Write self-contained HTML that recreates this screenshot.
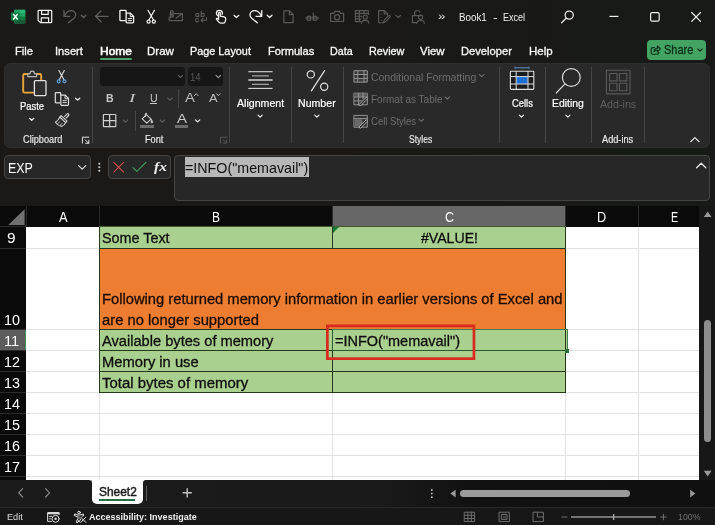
<!DOCTYPE html>
<html>
<head>
<meta charset="utf-8">
<title>Book1 - Excel</title>
<style>
*{box-sizing:border-box;margin:0;padding:0}
html,body{width:715px;height:525px;overflow:hidden;background:#1a1918;font-family:"Liberation Sans",sans-serif;}
#app{position:relative;width:715px;height:525px;overflow:hidden;background:linear-gradient(90deg,#1b1917 0,#1a1918 350px,#171a17 715px);}
.a{position:absolute}
.t{position:absolute;white-space:nowrap;line-height:1;transform-origin:0 0;font-family:"Liberation Sans",sans-serif}
svg{position:absolute;left:0;top:0;overflow:visible}
.sep{position:absolute;width:1px;background:#474747;top:67px;height:76px}
.ch{position:absolute;top:206px;height:20.5px;background:#0a0a0a;color:#fff;font-size:13.5px;text-align:center;line-height:1;padding-top:5px}
.rh{position:absolute;left:0;width:26px;background:#0a0a0a}
.hl{position:absolute;left:26px;width:673px;height:1px;background:#e2e2e2}
.vl{position:absolute;top:226.5px;height:253.5px;width:1px;background:#e2e2e2}
.bd{position:absolute;background:#26381c}
</style>
</head>
<body>
<div id="app">

<!-- ===== TABS ROW ===== -->
<div class="a" style="left:100px;top:58.4px;width:31.5px;height:1.8px;background:#4b9f6a;border-radius:1px"></div>
<div class="a" style="left:646.5px;top:39.5px;width:59.5px;height:20.5px;background:#42a363;border-radius:4px"></div>

<!-- ===== RIBBON ===== -->
<div class="a" style="left:4px;top:63px;width:706px;height:84.5px;background:#292929;border-radius:7px;box-shadow:inset 0 0 0 1px #2e2e2e"></div>
<div class="sep" style="left:92px"></div>
<div class="sep" style="left:229px"></div>
<div class="sep" style="left:291px"></div>
<div class="sep" style="left:343px"></div>
<div class="sep" style="left:499px"></div>
<div class="sep" style="left:545px"></div>
<div class="sep" style="left:591px"></div>
<div class="sep" style="left:644px"></div>
<div class="a" style="left:178px;top:89px;width:1px;height:19px;background:#474747"></div>
<div class="a" style="left:134.5px;top:110.5px;width:1px;height:20px;background:#474747"></div>
<div class="a" style="left:100px;top:67px;width:84.5px;height:19px;background:#161616;border-radius:3.5px"></div>
<div class="a" style="left:187.5px;top:67px;width:35.5px;height:19px;background:#161616;border-radius:3.5px"></div>
<div class="a" style="left:140px;top:124.8px;width:13.5px;height:3px;background:#6c6c6c"></div>
<div class="a" style="left:174.5px;top:124.8px;width:13.5px;height:3px;background:#6c6c6c"></div>
<div class="a" style="left:150px;top:103.4px;width:7.3px;height:1px;background:#c9c9c9"></div>

<!-- ===== FORMULA BAR ===== -->
<div class="a" style="left:4.3px;top:155px;width:86.5px;height:24.3px;background:#272727;border:1px solid #454545;border-radius:4px"></div>
<div class="a" style="left:108px;top:155px;width:63px;height:24.3px;background:#272727;border:1px solid #454545;border-radius:4px"></div>
<div class="a" style="left:174.3px;top:155px;width:536px;height:45.8px;background:#272727;border:1px solid #454545;border-radius:4px"></div>
<div class="a" style="left:185px;top:157px;width:124px;height:20px;background:#b8b8b8"></div>

<!-- ===== GRID ===== -->
<div class="a" style="left:0;top:206px;width:699px;height:274px;background:#fff"></div>
<div class="ch" style="left:0;width:26px"></div>
<div class="ch" style="left:26px;width:73px"></div>
<div class="ch" style="left:99px;width:233px"></div>
<div class="ch" style="left:332px;width:233.5px;background:#676767"></div>
<div class="ch" style="left:565.5px;width:72.5px"></div>
<div class="ch" style="left:638px;width:61px"></div>
<div class="a" style="left:332px;top:225.5px;width:233.5px;height:1.2px;background:#3c8a50"></div>
<div class="rh" style="top:226.5px;height:253.5px"></div>
<div class="rh" style="top:329.5px;height:21px;background:#5d5d5d"></div>
<div class="a" style="left:25px;top:329.5px;width:1.2px;height:21px;background:#3c8a50"></div>
<!-- header separators -->
<div class="a" style="left:25.5px;top:206px;width:1px;height:20.5px;background:#2b2b2b"></div>
<div class="a" style="left:98.5px;top:206px;width:1px;height:20.5px;background:#2b2b2b"></div>
<div class="a" style="left:331.5px;top:206px;width:1px;height:20.5px;background:#2b2b2b"></div>
<div class="a" style="left:565px;top:206px;width:1px;height:20.5px;background:#2b2b2b"></div>
<div class="a" style="left:637.5px;top:206px;width:1px;height:20.5px;background:#2b2b2b"></div>
<div class="a" style="left:0;top:226px;width:26px;height:1px;background:#2b2b2b"></div>
<div class="a" style="left:0;top:248px;width:26px;height:1px;background:#2b2b2b"></div>
<div class="a" style="left:0;top:329px;width:26px;height:1px;background:#2b2b2b"></div>
<div class="a" style="left:0;top:350px;width:26px;height:1px;background:#2b2b2b"></div>
<div class="a" style="left:0;top:371px;width:26px;height:1px;background:#2b2b2b"></div>
<div class="a" style="left:0;top:392px;width:26px;height:1px;background:#2b2b2b"></div>
<div class="a" style="left:0;top:413px;width:26px;height:1px;background:#2b2b2b"></div>
<div class="a" style="left:0;top:434px;width:26px;height:1px;background:#2b2b2b"></div>
<div class="a" style="left:0;top:455px;width:26px;height:1px;background:#2b2b2b"></div>
<div class="a" style="left:0;top:476px;width:26px;height:1px;background:#2b2b2b"></div>
<!-- gridlines -->
<div class="hl" style="top:248px"></div>
<div class="hl" style="top:329px"></div>
<div class="hl" style="top:350px"></div>
<div class="hl" style="top:371px"></div>
<div class="hl" style="top:392px"></div>
<div class="hl" style="top:413px"></div>
<div class="hl" style="top:434px"></div>
<div class="hl" style="top:455px"></div>
<div class="hl" style="top:476px"></div>
<div class="vl" style="left:98.5px"></div>
<div class="vl" style="left:331.5px"></div>
<div class="vl" style="left:565px"></div>
<div class="vl" style="left:637.5px"></div>
<!-- fills -->
<div class="a" style="left:99px;top:226.5px;width:466.5px;height:22px;background:#a9d08e"></div>
<div class="a" style="left:99px;top:248px;width:466.5px;height:82px;background:#ed7d31"></div>
<div class="a" style="left:99px;top:329.5px;width:466.5px;height:63px;background:#a9d08e"></div>
<div class="a" style="left:565px;top:330px;width:3px;height:20px;background:#a9d08e"></div>
<!-- cell borders -->
<div class="bd" style="left:99px;top:247.6px;width:467px;height:1px"></div>
<div class="bd" style="left:99px;top:329px;width:467px;height:1px"></div>
<div class="bd" style="left:99px;top:350px;width:467px;height:1px"></div>
<div class="bd" style="left:99px;top:371px;width:467px;height:1px"></div>
<div class="bd" style="left:99px;top:392px;width:467px;height:1px"></div>
<div class="bd" style="left:98.5px;top:226.5px;width:1px;height:166px"></div>
<div class="bd" style="left:332px;top:226.5px;width:1px;height:21px"></div>
<div class="bd" style="left:332px;top:329px;width:1px;height:64px"></div>
<div class="bd" style="left:565px;top:226.5px;width:1px;height:166px"></div>
<div class="a" style="left:99px;top:226px;width:467px;height:1px;background:#3f5a33"></div>
<!-- selection C11 -->
<div class="a" style="left:332px;top:329px;width:236px;height:22px;border:1px solid #3f7d4d;border-left-color:#2b5c35;border-bottom-color:#2a5a30"></div>
<div class="a" style="left:565px;top:349px;width:4px;height:4px;background:#2d6b3c"></div>

<!-- ===== VSCROLL ===== -->
<div class="a" style="left:699px;top:206px;width:16px;height:274px;background:#171717"></div>
<div class="a" style="left:704.3px;top:319.7px;width:7px;height:122px;background:#8d8d8d;border-radius:3.5px"></div>

<!-- ===== SHEET TABS ===== -->
<div class="a" style="left:0;top:480px;width:715px;height:28px;background:linear-gradient(90deg,#1b1b1c 0,#1a1a1b 380px,#111112 470px,#101011 715px)"></div>
<div class="a" style="left:0;top:507px;width:715px;height:1px;background:#2a2a2a"></div>
<div class="a" style="left:91.6px;top:480px;width:51.4px;height:23.6px;background:#fff;border-radius:0 0 5px 5px"></div>
<div class="a" style="left:99.3px;top:499.3px;width:36.2px;height:2px;background:#217346"></div>
<div class="a" style="left:146px;top:485.5px;width:1px;height:15px;background:#5c5c5c"></div>
<div class="a" style="left:460.3px;top:489.8px;width:169.6px;height:7.6px;background:#9b9b9b;border-radius:3.8px"></div>

<!-- ===== STATUS BAR ===== -->
<div class="a" style="left:0;top:508px;width:715px;height:17px;background:#171717"></div>

<!-- ===== TEXT ===== -->
<div id="txt" style="position:absolute;left:0;top:0;width:715px;height:525px;will-change:transform">
<div class="t" style="left:459.40px;top:12.00px;font-size:11.5px;color:#efefef;transform:scaleX(0.8525);">Book1</div>
<div class="t" style="left:493.20px;top:12.00px;font-size:11.5px;color:#efefef;transform:scaleX(1.2228);">-</div>
<div class="t" style="left:503.00px;top:12.00px;font-size:11.5px;color:#efefef;transform:scaleX(0.7822);">Excel</div>
<div class="t" style="left:438.30px;top:11.00px;font-size:11px;color:#e0e0e0;transform:scaleX(1.2082);">&raquo;</div>
<div class="t" style="left:15.30px;top:46.00px;font-size:11px;color:#fafafa;transform:scaleX(1.0206);-webkit-text-stroke:0.3px #fafafa;">File</div>
<div class="t" style="left:55.10px;top:46.00px;font-size:11px;color:#fafafa;transform:scaleX(1.0140);-webkit-text-stroke:0.3px #fafafa;">Insert</div>
<div class="t" style="left:99.90px;top:46.00px;font-size:11px;color:#ffffff;transform:scaleX(1.0905);-webkit-text-stroke:0.55px #fff;">Home</div>
<div class="t" style="left:146.80px;top:46.00px;font-size:11px;color:#fafafa;transform:scaleX(1.0478);-webkit-text-stroke:0.3px #fafafa;">Draw</div>
<div class="t" style="left:189.60px;top:46.00px;font-size:11px;color:#fafafa;transform:scaleX(0.9857);-webkit-text-stroke:0.3px #fafafa;">Page Layout</div>
<div class="t" style="left:267.70px;top:46.00px;font-size:11px;color:#fafafa;transform:scaleX(1.0100);-webkit-text-stroke:0.3px #fafafa;">Formulas</div>
<div class="t" style="left:329.80px;top:46.00px;font-size:11px;color:#fafafa;transform:scaleX(0.9763);-webkit-text-stroke:0.3px #fafafa;">Data</div>
<div class="t" style="left:368.60px;top:46.00px;font-size:11px;color:#fafafa;transform:scaleX(0.9812);-webkit-text-stroke:0.3px #fafafa;">Review</div>
<div class="t" style="left:419.70px;top:46.00px;font-size:11px;color:#fafafa;transform:scaleX(1.0357);-webkit-text-stroke:0.3px #fafafa;">View</div>
<div class="t" style="left:460.80px;top:46.00px;font-size:11px;color:#fafafa;transform:scaleX(1.0151);-webkit-text-stroke:0.3px #fafafa;">Developer</div>
<div class="t" style="left:529.20px;top:46.00px;font-size:11px;color:#fafafa;transform:scaleX(1.0475);-webkit-text-stroke:0.3px #fafafa;">Help</div>
<div class="t" style="left:663.50px;top:44.00px;font-size:12.3px;color:#0b2f18;transform:scaleX(0.8925);-webkit-text-stroke:0.3px #0b2f18;">Share</div>
<div class="t" style="left:20.10px;top:101.00px;font-size:10.5px;color:#ffffff;transform:scaleX(0.8973);-webkit-text-stroke:0.2px #fff;">Paste</div>
<div class="t" style="left:237.00px;top:98.00px;font-size:10.5px;color:#ffffff;transform:scaleX(1.0106);-webkit-text-stroke:0.2px #fff;">Alignment</div>
<div class="t" style="left:298.30px;top:98.00px;font-size:10.5px;color:#ffffff;transform:scaleX(1.0091);-webkit-text-stroke:0.2px #fff;">Number</div>
<div class="t" style="left:511.50px;top:98.00px;font-size:10.5px;color:#ffffff;transform:scaleX(0.8953);-webkit-text-stroke:0.2px #fff;">Cells</div>
<div class="t" style="left:552.00px;top:98.00px;font-size:10.5px;color:#ffffff;transform:scaleX(0.9904);-webkit-text-stroke:0.2px #fff;">Editing</div>
<div class="t" style="left:600.00px;top:99.00px;font-size:10.5px;color:#5f5f5f;transform:scaleX(1.0166);">Add-ins</div>
<div class="t" style="left:23.20px;top:135.00px;font-size:10px;color:#ececec;transform:scaleX(0.9180);-webkit-text-stroke:0.15px #ececec;">Clipboard</div>
<div class="t" style="left:145.20px;top:135.00px;font-size:10px;color:#ececec;transform:scaleX(0.9143);-webkit-text-stroke:0.15px #ececec;">Font</div>
<div class="t" style="left:409.30px;top:135.00px;font-size:10px;color:#ececec;transform:scaleX(0.8519);-webkit-text-stroke:0.15px #ececec;">Styles</div>
<div class="t" style="left:602.00px;top:135.00px;font-size:10px;color:#ececec;transform:scaleX(0.9202);-webkit-text-stroke:0.15px #ececec;">Add-ins</div>
<div class="t" style="left:370.50px;top:72.00px;font-size:10.5px;color:#6e6e6e;transform:scaleX(0.9958);">Conditional Formatting</div>
<div class="t" style="left:370.50px;top:94.00px;font-size:10.5px;color:#6e6e6e;transform:scaleX(0.9521);">Format as Table</div>
<div class="t" style="left:370.50px;top:116.00px;font-size:10.5px;color:#6e6e6e;transform:scaleX(0.9071);">Cell Styles</div>
<div class="t" style="left:189.50px;top:72.00px;font-size:10.5px;color:#575757;transform:scaleX(0.9155);">14</div>
<div class="t" style="left:106.10px;top:93.00px;font-size:11.5px;color:#c9c9c9;transform:scaleX(0.9143);font-weight:bold;">B</div>
<div class="t" style="left:128.80px;top:92.00px;font-size:12px;color:#c9c9c9;transform:scaleX(1.5750);font-style:italic;font-family:'Liberation Serif',serif;">I</div>
<div class="t" style="left:149.80px;top:93.00px;font-size:11px;color:#c9c9c9;transform:scaleX(0.9682);">U</div>
<div class="t" style="left:185.10px;top:91.00px;font-size:13.5px;color:#bdbdbd;transform:scaleX(1.0981);">A</div>
<div class="t" style="left:208.80px;top:93.00px;font-size:11.5px;color:#bdbdbd;transform:scaleX(1.1210);">A</div>
<div class="t" style="left:176.80px;top:113.00px;font-size:12.5px;color:#c9c9c9;transform:scaleX(1.1985);">A</div>
<div class="t" style="left:8.30px;top:161.00px;font-size:14px;color:#ffffff;transform:scaleX(0.8888);">EXP</div>
<div class="t" style="left:185.30px;top:161.00px;font-size:14.5px;color:#111;transform:scaleX(0.9847);">=INFO("memavail")</div>
<div class="t" style="left:153.80px;top:160.00px;font-size:13.5px;color:#ececec;transform:scaleX(1.1467);font-style:italic;font-weight:bold;font-family:'Liberation Serif',serif;">fx</div>
<div class="t" style="left:98.70px;top:485.00px;font-size:13px;color:#1b1b1b;transform:scaleX(0.9174);-webkit-text-stroke:0.45px #1b1b1b;">Sheet2</div>
<div class="t" style="left:6.90px;top:512.00px;font-size:9.5px;color:#dcdcdc;transform:scaleX(0.9649);">Edit</div>
<div class="t" style="left:88.50px;top:512.00px;font-size:9.5px;color:#f2f2f2;transform:scaleX(0.9486);font-weight:bold;">Accessibility: Investigate</div>
<div class="t" style="left:678.00px;top:512.00px;font-size:9.5px;color:#6f6f6f;transform:scaleX(0.9254);">100%</div>
<div class="t" style="left:102.10px;top:231.00px;font-size:14.7px;color:#0d0d0d;transform:scaleX(0.9779);-webkit-text-stroke:0.3px #0d0d0d;">Some Text</div>
<div class="t" style="left:420.50px;top:231.00px;font-size:14.7px;color:#0d0d0d;transform:scaleX(0.9608);-webkit-text-stroke:0.3px #0d0d0d;">#VALUE!</div>
<div class="t" style="left:102.00px;top:292.00px;font-size:14.7px;color:#1c0d04;transform:scaleX(1.0037);-webkit-text-stroke:0.3px #1c0d04;">Following returned memory information in earlier versions of Excel and</div>
<div class="t" style="left:102.00px;top:313.00px;font-size:14.7px;color:#1c0d04;transform:scaleX(1.0066);-webkit-text-stroke:0.3px #1c0d04;">are no longer supported</div>
<div class="t" style="left:102.00px;top:334.00px;font-size:14.7px;color:#0d0d0d;transform:scaleX(0.9966);-webkit-text-stroke:0.3px #0d0d0d;">Available bytes of memory</div>
<div class="t" style="left:334.50px;top:334.00px;font-size:14.7px;color:#0d0d0d;transform:scaleX(0.9864);-webkit-text-stroke:0.3px #0d0d0d;">=INFO("memavail")</div>
<div class="t" style="left:102.20px;top:355.00px;font-size:14.7px;color:#0d0d0d;transform:scaleX(1.0039);-webkit-text-stroke:0.3px #0d0d0d;">Memory in use</div>
<div class="t" style="left:102.00px;top:376.00px;font-size:14.7px;color:#0d0d0d;transform:scaleX(1.0176);-webkit-text-stroke:0.3px #0d0d0d;">Total bytes of memory</div>
<div class="t" style="left:7.40px;top:231.00px;font-size:14.5px;color:#fff;transform:scaleX(1.0646);">9</div>
<div class="t" style="left:3.70px;top:313.00px;font-size:14.5px;color:#fff;transform:scaleX(0.9913);">10</div>
<div class="t" style="left:4.30px;top:334.00px;font-size:14.5px;color:#fff;transform:scaleX(1.0158);">11</div>
<div class="t" style="left:3.70px;top:355.00px;font-size:14.5px;color:#fff;transform:scaleX(0.9913);">12</div>
<div class="t" style="left:3.70px;top:376.00px;font-size:14.5px;color:#fff;transform:scaleX(0.9913);">13</div>
<div class="t" style="left:3.70px;top:397.00px;font-size:14.5px;color:#fff;transform:scaleX(0.9913);">14</div>
<div class="t" style="left:3.70px;top:418.00px;font-size:14.5px;color:#fff;transform:scaleX(0.9913);">15</div>
<div class="t" style="left:3.70px;top:439.00px;font-size:14.5px;color:#fff;transform:scaleX(0.9913);">16</div>
<div class="t" style="left:3.70px;top:460.00px;font-size:14.5px;color:#fff;transform:scaleX(0.9913);">17</div>
<div class="t" style="left:58.80px;top:210.00px;font-size:14px;color:#fff;transform:scaleX(0.9204);">A</div>
<div class="t" style="left:211.70px;top:210.00px;font-size:14px;color:#fff;transform:scaleX(0.8562);">B</div>
<div class="t" style="left:444.50px;top:210.00px;font-size:14px;color:#fff;transform:scaleX(0.8988);">C</div>
<div class="t" style="left:597.10px;top:210.00px;font-size:14px;color:#fff;transform:scaleX(0.9086);">D</div>
<div class="t" style="left:671.30px;top:210.00px;font-size:14px;color:#fff;transform:scaleX(0.7599);">E</div>
</div>
<svg width="715" height="525" viewBox="0 0 715 525" fill="none" stroke-linecap="round" stroke-linejoin="round">
<!-- ============ TITLE BAR ============ -->
<!-- excel logo -->
<g stroke="none">
  <rect x="14" y="9.8" width="11.2" height="13.7" rx="1.2" fill="#1f9a5f"/>
  <rect x="14.5" y="9.8" width="5.4" height="3.6" fill="#21a366"/>
  <rect x="19.9" y="9.8" width="5.4" height="3.6" fill="#2db777"/>
  <rect x="14.5" y="13.3" width="5.4" height="3.4" fill="#107c41"/>
  <rect x="19.9" y="13.3" width="5.4" height="3.4" fill="#21a366"/>
  <rect x="14.5" y="16.6" width="5.4" height="3.4" fill="#185c37"/>
  <rect x="19.9" y="16.6" width="5.4" height="3.4" fill="#107c41"/>
  <rect x="14.5" y="19.9" width="10.8" height="3.5" fill="#185c37"/>
  <rect x="10.9" y="12.4" width="8.4" height="8.4" rx="0.9" fill="#107c41"/>
  <path d="M13.2 14.1 L17.7 19.5 M17.7 14.1 L13.2 19.5" stroke="#f4fff8" stroke-width="1.5" stroke-linecap="butt"/>
</g>
<!-- save -->
<g stroke="#f4f4f4" stroke-width="1.2">
  <path d="M38.1 11.2 Q38.1 10.4 38.9 10.4 H50.9 Q51.7 10.4 51.7 11.2 V21.9 Q51.7 22.7 50.9 22.7 H40.4 L38.1 20.4 Z"/>
  <path d="M41.6 10.6 V14.4 H48.2 V10.6"/>
  <path d="M41.3 22.5 V17.8 H48.6 V22.5"/>
</g>
<!-- undo (dim) -->
<g stroke="#606060" stroke-width="1.3">
  <path d="M64 10.6 V16.3 H69.7"/>
  <path d="M64.4 16 C66 12.6 68.4 10.7 71 10.7 C73.8 10.7 75.7 12.6 75.7 15 C75.7 16.4 75 17.4 74 18.2 L68.4 22.8"/>
  <path d="M81.3 15.3 L83.6 17.5 L85.9 15.3"/>
</g>
<!-- back arrow (dim) -->
<g stroke="#606060" stroke-width="1.3">
  <path d="M95.8 16.3 H108.2 M101 10.9 L95.6 16.3 L101 21.7"/>
</g>
<!-- copy/paste -->
<g stroke="#f4f4f4" stroke-width="1.3">
  <path d="M125.3 20.6 H120.6 Q119.9 20.6 119.9 19.9 V11.1 Q119.9 10.4 120.6 10.4 H125.4 Q126.1 10.4 126.1 11.1 V13"/>
  <path d="M126.2 13.2 H130.4 L133.6 16.4 V22 Q133.6 22.8 132.8 22.8 H126.9 Q126.1 22.8 126.1 22 Z" fill="#1a1918"/>
  <path d="M130.2 13.4 V16.6 H133.4" stroke-width="1"/>
  <path d="M128.2 18.6 H131.6 M128.2 20.6 H131.6" stroke-width="1"/>
</g>
<!-- scissors -->
<g stroke="#f4f4f4" stroke-width="1.2">
  <path d="M148 10.3 L153.6 20.2 M154.4 10.3 L148.8 20.2"/>
  <circle cx="148.6" cy="21.6" r="1.6"/>
  <circle cx="153.8" cy="21.6" r="1.6"/>
</g>
<!-- envelope + clip (dim) -->
<g stroke="#5a5a5a" stroke-width="1.2">
  <path d="M174.5 13.6 H182.4 V20.6 H169.2 V17"/>
  <path d="M176 18.2 L182.2 13.8"/>
  <path d="M170.4 17.8 V12.2 Q170.4 10.6 171.8 10.6 Q173.2 10.6 173.2 12.2 V16.4 Q173.2 17.2 172.5 17.2 Q171.8 17.2 171.8 16.4 V12.6"/>
</g>
<!-- ab c<- (dim) -->
<g stroke="#5a5a5a" stroke-width="1.1">
  <path d="M198.7 13.5 V16.6 M198.7 15 Q198.7 13.4 197.2 13.4 Q195.6 13.4 195.6 15 Q195.6 16.6 197.2 16.6 Q198.7 16.6 198.7 15"/>
  <path d="M201.2 11 V16.6 M201.2 15 Q201.2 13.4 202.8 13.4 Q204.4 13.4 204.4 15 Q204.4 16.6 202.8 16.6 Q201.2 16.6 201.2 15"/>
  <path d="M198.6 19.2 Q197.8 18.5 197 18.5 Q195.5 18.5 195.5 20.2 Q195.5 21.9 197 21.9 Q197.8 21.9 198.6 21.2"/>
  <path d="M206.6 17.6 V20.3 H201.2 M203 18.4 L201 20.3 L203 22.2"/>
</g>
<!-- touch hand -->
<g stroke="#f4f4f4" stroke-width="1.25">
  <path d="M217.6 15.6 Q216.4 14.6 216.4 13.2 Q216.4 10.4 219.4 10.4 Q222.4 10.4 222.4 13.2 Q222.4 13.8 222.2 14.3"/>
  <path d="M218.6 19.3 V13.1 Q218.6 12.2 219.4 12.2 Q220.3 12.2 220.3 13.1 V16.2 L224.2 16.9 Q225.8 17.3 225.7 18.9 L225.3 21.3 Q225 23.1 223.2 23.1 H220.8 Q219.6 23.1 218.9 22.2 L216.5 19.3 Q216.2 18.6 217 18.3 Q217.6 18.1 218.6 19.3"/>
  <path d="M234 15.3 L236.4 17.5 L238.8 15.3"/>
</g>
<!-- redo -->
<g stroke="#f4f4f4" stroke-width="1.3">
  <path d="M261.7 10.6 V16.3 H256"/>
  <path d="M261.3 16 C259.7 12.6 257.3 10.7 254.7 10.7 C251.9 10.7 250 12.6 250 15 C250 16.4 250.7 17.4 251.7 18.2 L257.3 22.8"/>
  <path d="M267.2 15.3 L269.6 17.5 L272 15.3"/>
</g>
<!-- new doc (dim) -->
<g stroke="#5a5a5a" stroke-width="1.2">
  <path d="M283.9 10.9 H289.6 L293.1 14.4 V22.7 H283.9 Z"/>
  <path d="M289.4 11.1 V14.6 H292.9"/>
</g>
<!-- strikethrough ab (dim) -->
<g stroke="#5a5a5a" stroke-width="1.1">
  <path d="M310.6 16.2 V20.3 M310.6 18.3 Q310.6 16.1 308.7 16.1 Q306.8 16.1 306.8 18.3 Q306.8 20.4 308.7 20.4 Q310.6 20.4 310.6 18.3"/>
  <path d="M313.2 13 V20.3 M313.2 18.3 Q313.2 16.1 315.1 16.1 Q317 16.1 317 18.3 Q317 20.4 315.1 20.4 Q313.2 20.4 313.2 18.3"/>
  <path d="M305.6 18 H318.8"/>
</g>
<!-- camera (dim) -->
<g stroke="#5a5a5a" stroke-width="1.2">
  <path d="M330.6 13.3 H333.8 L334.9 11.4 H339.4 L340.5 13.3 H343.6 V21.5 H330.6 Z"/>
  <circle cx="337.1" cy="17.2" r="2.6"/>
</g>
<!-- grid + person (dim) -->
<g stroke="#5a5a5a" stroke-width="1.1">
  <path d="M361 21.6 H355.3 V10.6 H368.3 V14.5"/>
  <path d="M355.3 13.4 H368.3 M355.3 16.2 H361.6 M355.3 18.9 H360.6 M359.4 10.6 V21.6 M363.8 10.6 V13.4"/>
  <circle cx="365.2" cy="17.1" r="2.1"/>
  <path d="M361.6 23.3 Q361.6 20.4 365.2 20.4 Q368.8 20.4 368.8 23.3"/>
</g>
<!-- doc + pen (dim) -->
<g stroke="#5a5a5a" stroke-width="1.1">
  <path d="M383.4 22.8 H378.6 V10.6 H384.4 L387.6 13.8 V15.2"/>
  <path d="M384.2 10.8 V14 H387.4"/>
  <path d="M381.2 14.2 V14.3 M381.2 17.2 V17.3 M381.2 20.2 V20.3"/>
  <path d="M383.4 22.9 L384.2 20.2 L388.6 15.8 Q389.4 15.2 390 15.8 Q390.6 16.5 390 17.2 L385.6 21.6 Z"/>
  <path d="M395.8 15.3 L398.2 17.5 L400.6 15.3"/>
</g>
<!-- lock + person (dim) -->
<g stroke="#5a5a5a" stroke-width="1.15">
  <path d="M417 22.6 H412.4 V15.6 H420.6"/>
  <path d="M414.6 15.4 V13.2 Q414.6 10.5 417.3 10.5 Q419.5 10.5 419.9 12.2"/>
  <circle cx="420.6" cy="17.2" r="2.1"/>
  <path d="M416.9 23.3 Q416.9 20.5 420.6 20.5 Q424.3 20.5 424.3 23.3"/>
</g>
<!-- search -->
<g stroke="#ececec" stroke-width="1.25">
  <circle cx="569.2" cy="15.1" r="4.1"/>
  <path d="M566.2 18.2 L561.6 22.8"/>
</g>
<!-- window controls -->
<g stroke="#f0f0f0" stroke-width="1.2">
  <path d="M609.4 16.4 H618.4" stroke-linecap="butt"/>
  <rect x="650.6" y="12.6" width="8.6" height="8.6" rx="1.5"/>
  <path d="M691.7 12.5 L700.5 21.3 M700.5 12.5 L691.7 21.3"/>
</g>
<!-- share icon + caret -->
<g stroke="#0b2f18" stroke-width="1.15">
  <path d="M654.4 47.6 H652.6 Q651.2 47.6 651.2 49 V52.8 Q651.2 54.2 652.6 54.2 H657.4 Q658.8 54.2 658.8 52.8 V52.2"/>
  <path d="M654 51.6 Q654.2 48.6 657.4 48.3 V46 L660.4 48.9 L657.4 51.8 V50 Q655.4 50 654 51.6 Z"/>
  <path d="M697.8 49 L700 51.1 L702.2 49"/>
</g>
<!-- ============ RIBBON ============ -->
<!-- paste: clipboard -->
<g stroke-width="1.9">
  <path d="M27.6 74 H24.6 Q23.2 74 23.2 75.4 V91.2 Q23.2 92.6 24.6 92.6 H33.2" stroke="#e9a73a"/>
  <path d="M36.8 74 H39.8 Q41.2 74 41.2 75.4 V79.4" stroke="#e9a73a"/>
  <path d="M27.8 76.6 V73.8 H30 Q30 71.2 32.2 71.2 Q34.4 71.2 34.4 73.8 H36.6 V76.6 Z" stroke="#b9b9b9" stroke-width="1.2" fill="#292929"/>
  <rect x="34.4" y="80.6" width="11.6" height="15" rx="1" stroke="#e2e2e2" stroke-width="1.3" fill="#2e2e2e"/>
</g>
<path d="M29.6 118.3 L31.7 120.3 L33.9 118.3" stroke="#f0f0f0" stroke-width="1.2"/>
<!-- cut -->
<g stroke-width="1.15">
  <path d="M58.9 70.6 L63.9 79.8 M64.3 70.6 L59.3 79.8" stroke="#dcdcdc"/>
  <circle cx="58.7" cy="81.3" r="1.5" stroke="#5aa2e6"/>
  <circle cx="64.5" cy="81.3" r="1.5" stroke="#5aa2e6"/>
</g>
<!-- copy -->
<g stroke="#dedede" stroke-width="1.2">
  <path d="M59.6 102.8 H56 Q55.3 102.8 55.3 102.1 V93.3 Q55.3 92.6 56 92.6 H60 Q60.7 92.6 60.7 93.3 V95"/>
  <path d="M60.8 95.2 H65.2 L68.5 98.5 V104.6 Q68.5 105.3 67.8 105.3 H61.5 Q60.8 105.3 60.8 104.6 Z" fill="#292929"/>
  <path d="M65 95.4 V98.7 H68.3" stroke-width="0.95"/>
  <path d="M62.9 100.6 H66.4 M62.9 102.6 H66.4" stroke-width="0.95"/>
  <path d="M75.6 98.2 L77.7 100.1 L79.8 98.2" stroke="#f0f0f0"/>
</g>
<!-- format painter -->
<g stroke="#d6d6d6" stroke-width="1.1">
  <path d="M64.6 116.4 L67.2 113.9 Q68 113.3 68.7 114 Q69.3 114.8 68.6 115.5 L66.1 118"/>
  <path d="M61.2 115.6 L67 121.2 L65.6 122.7 L59.8 117 Z"/>
  <path d="M59.6 117.4 Q58.4 120.6 55.4 122.2 Q57.6 125.4 61.4 126.4 Q64.6 125.4 65.4 122.8"/>
  <path d="M58 123.4 L59.6 121.8 M60.4 125 L62 123.4" stroke-width="0.9"/>
</g>
<!-- dialog launchers -->
<g stroke="#e4e4e4" stroke-width="1">
  <path d="M88.8 137.2 H82.4 V143 M85.2 139.8 L88.6 143.2 M88.8 140.2 V143.3 H85.7"/>
</g>
<g stroke="#555" stroke-width="1">
  <path d="M226.6 137.2 H220.4 V143 M223.2 139.8 L226.4 143 M226.6 140.2 V143.2 H223.6"/>
</g>
<!-- font box carets -->
<path d="M178.2 75.4 L180.4 77.5 L182.6 75.4" stroke="#5e5e5e" stroke-width="1.1"/>
<path d="M216 75.4 L218.3 77.6 L220.6 75.4" stroke="#9a9a9a" stroke-width="1.1"/>
<path d="M167.6 98 L169.9 100.1 L172.2 98" stroke="#5e5e5e" stroke-width="1.1"/>
<!-- A^ A v -->
<path d="M194.4 95.6 L196.2 93.7 L198 95.6" stroke="#bdbdbd" stroke-width="1"/>
<path d="M216.6 93.8 L218.3 95.6 L220 93.8" stroke="#bdbdbd" stroke-width="1"/>
<!-- borders icon -->
<g stroke="#cfcfcf" stroke-width="1.2">
  <rect x="103.4" y="114.5" width="12.4" height="12.2" rx="0.6"/>
  <path d="M109.6 114.5 V126.7 M103.4 120.6 H115.8"/>
</g>
<path d="M123.2 120 L125.5 122.1 L127.8 120" stroke="#5e5e5e" stroke-width="1.1"/>
<!-- fill bucket -->
<g stroke="#cfcfcf" stroke-width="1.1">
  <path d="M146.4 114.6 L151 119.2 L146.8 123.2 L142.2 118.8 Z"/>
  <path d="M145.4 116.4 V114.4 Q145.4 113.4 146.4 113.4"/>
  <path d="M151.4 119.4 Q152.8 121.2 152.8 122 Q152.8 123 151.9 123 Q151 123 151 122 Q151 121.2 151.4 119.4 Z" fill="#cfcfcf" stroke-width="0.6"/>
</g>
<path d="M160 120 L162.3 122.1 L164.6 120" stroke="#5e5e5e" stroke-width="1.1"/>
<path d="M195.4 119.9 L197.6 121.9 L199.8 119.9" stroke="#f0f0f0" stroke-width="1.2"/>
<!-- alignment -->
<g stroke-linecap="butt">
  <path d="M248.3 71.7 H272.6" stroke="#d8d8d8" stroke-width="1.1"/>
  <path d="M252 75.9 H268.9" stroke="#b5b5b5" stroke-width="1.1"/>
  <path d="M248.3 80 H272.6" stroke="#e6e6e6" stroke-width="1.4"/>
  <path d="M252 84.3 H268.9" stroke="#b5b5b5" stroke-width="1.1"/>
  <path d="M248.3 88.4 H272.6" stroke="#d8d8d8" stroke-width="1.1"/>
</g>
<path d="M258.0 115.1 L260.1 117.1 L262.2 115.1" stroke="#f0f0f0" stroke-width="1.2"/>
<!-- number % -->
<g stroke="#e2e2e2" stroke-width="1.2">
  <circle cx="310.8" cy="74.4" r="3.6"/>
  <circle cx="324.2" cy="86.8" r="3.6"/>
  <path d="M324.6 70.6 L311.4 90.8"/>
</g>
<path d="M314.8 115.1 L316.9 117.1 L319.0 115.1" stroke="#f0f0f0" stroke-width="1.2"/>
<!-- styles icons (dim) -->
<g stroke="#949494" stroke-width="1">
  <rect x="354.3" y="70.7" width="13" height="11.4" fill="#3a3a3a"/>
  <rect x="357.8" y="74.5" width="6.2" height="3.9" fill="#262626" stroke="none"/>
  <path d="M354.3 74.5 H367.3 M354.3 78.4 H367.3 M357.8 70.7 V82.1 M364 70.7 V82.1"/>
  <rect x="354.3" y="93.2" width="13" height="11.6" fill="#323232"/>
  <rect x="354.8" y="93.7" width="12" height="3" fill="#5c5c5c" stroke="none"/>
  <path d="M354.3 97 H367.3 M354.3 100.9 H361.4 M358.6 93.2 V104.8 M363 93.2 V99"/>
  <path d="M359.2 104.4 L366.3 97.3 L367.7 98.7 L360.6 105.8 Z" fill="#2c2c2c" stroke="#b8b8b8" stroke-width="0.9"/>
  <rect x="354.3" y="115.4" width="13" height="11.8" fill="#323232"/>
  <path d="M354.3 118.6 H367.3"/>
  <rect x="354.9" y="119.2" width="7.4" height="7.4" fill="#6a6a6a" stroke="none"/>
  <path d="M359.2 126.8 L366.3 119.7 L367.7 121.1 L360.6 128.2 Z" fill="#2c2c2c" stroke="#b8b8b8" stroke-width="0.9"/>
</g>
<g stroke="#6e6e6e" stroke-width="1.1">
  <path d="M479.4 74.6 L481.7 76.7 L484 74.6"/>
  <path d="M445 96.9 L447.3 99 L449.6 96.9"/>
  <path d="M419 119.2 L421.3 121.3 L423.6 119.2"/>
</g>
<!-- cells -->
<g stroke-linecap="butt">
  <path d="M515 67.8 H529" stroke="#5b86b8" stroke-width="1.1"/>
  <path d="M515 66.6 V69 M529 66.6 V69" stroke="#5b86b8" stroke-width="0.9"/>
  <rect x="510.4" y="71.2" width="23.4" height="18.2" fill="#1c1c1c" stroke="none"/>
  <rect x="516.4" y="76.8" width="11.4" height="7" fill="#1b6fd6" stroke="none"/>
  <rect x="510.4" y="71.2" width="23.4" height="18.2" rx="0.8" stroke="#e0e0e0" stroke-width="1.1"/>
  <path d="M516.2 71.2 V89.4 M528 71.2 V89.4 M510.4 76.6 H533.8 M510.4 84 H533.8" stroke="#e0e0e0" stroke-width="1"/>
</g>
<path d="M519.4 115.1 L521.5 117.1 L523.6 115.1" stroke="#f0f0f0" stroke-width="1.2"/>
<!-- editing -->
<g stroke="#dcdcdc" stroke-width="1.15">
  <circle cx="571.3" cy="77.5" r="8.9"/>
  <path d="M565 83.9 L556.2 93"/>
</g>
<path d="M565.8 115.1 L567.9 117.1 L570.0 115.1" stroke="#f0f0f0" stroke-width="1.2"/>
<!-- add-ins (dim) -->
<g stroke="#5a5a5a" stroke-width="1.1">
  <rect x="606.4" y="70.3" width="23.6" height="23.6" rx="0.6"/>
  <rect x="609.6" y="73.5" width="7.4" height="7.4"/>
  <rect x="619.4" y="73.5" width="7.4" height="7.4"/>
  <rect x="609.6" y="83.3" width="7.4" height="7.4"/>
  <rect x="619.4" y="83.3" width="7.4" height="7.4"/>
</g>
<!-- collapse carets -->
<path d="M690.8 141.6 L694.9 137.6 L699 141.6" stroke="#e8e8e8" stroke-width="1.3"/>
<path d="M696.6 167.8 L701.2 163.3 L705.8 167.8" stroke="#e8e8e8" stroke-width="1.3"/>
<!-- ============ FORMULA BAR ============ -->
<path d="M78.6 165.6 L82.2 169.2 L85.8 165.6" stroke="#dadada" stroke-width="1.2"/>
<g fill="#d0d0d0" stroke="none">
  <circle cx="99.3" cy="163.8" r="1.05"/><circle cx="99.3" cy="167.3" r="1.05"/><circle cx="99.3" cy="170.8" r="1.05"/>
</g>
<path d="M113.8 162.4 L123.6 172.2 M123.6 162.4 L113.8 172.2" stroke="#d14b4b" stroke-width="1.1"/>
<path d="M133 167.6 L136.8 171.3 L145.9 162.4" stroke="#3f9d5e" stroke-width="1.15"/>
<!-- ============ GRID ============ -->
<path d="M24.6 209.2 V225 H8.2 Z" fill="#707070" stroke="none"/>
<path d="M333 227 H339 L333 233 Z" fill="#1d7a33" stroke="none"/>
<rect x="327.35" y="325.85" width="146.6" height="32.8" stroke="#d82a1e" stroke-width="2.7" stroke-linejoin="miter"/>
<!-- scroll arrows -->
<g fill="#9a9a9a" stroke="none">
  <path d="M707.7 211.4 L711.6 217 H703.8 Z"/>
  <path d="M707.7 476.4 L711.6 470.8 H703.8 Z"/>
  <path d="M450.4 493.6 L455.6 489.8 V497.4 Z"/>
  <path d="M695.4 493.6 L690.2 489.8 V497.4 Z"/>
</g>
<g fill="#c8c8c8" stroke="none">
  <circle cx="431.8" cy="490" r="0.9"/><circle cx="431.8" cy="493.6" r="0.9"/><circle cx="431.8" cy="497.2" r="0.9"/>
</g>
<!-- ============ SHEET TABS ============ -->
<path d="M88.6 480 H91.6 V483 Q91.6 480 88.6 480 Z M146 480 H143 V483 Q143 480 146 480 Z" fill="#fff" stroke="none"/>
<g stroke="#8a8a8a" stroke-width="1.2">
  <path d="M22.6 488.6 L18.7 492.8 L22.6 497"/>
  <path d="M45.6 488.6 L49.5 492.8 L45.6 497"/>
</g>
<path d="M182.6 492.8 H191.8 M187.2 488.2 V497.4" stroke="#c4c4c4" stroke-width="1.4" stroke-linecap="butt"/>
<!-- ============ STATUS BAR ============ -->
<!-- macro record icon -->
<g stroke="#dedede" stroke-width="1">
  <path d="M51.4 521.4 H47.6 V512.6 H59.2 V514.6"/>
  <path d="M47.6 513.4 H59.2" stroke-width="1.8" stroke-linecap="butt"/>
  <path d="M49.2 516.4 H51.6 M49.2 518.8 H51" stroke-width="0.9"/>
  <circle cx="55.6" cy="518.8" r="3.5" fill="#171717"/>
  <circle cx="55.6" cy="518.8" r="1.2" fill="#dedede" stroke="none"/>
</g>
<!-- accessibility icon -->
<g>
  <g stroke="#ececec" stroke-width="2.7">
    <path d="M75.2 515 L78 516 H80 L82.8 515"/>
    <path d="M79 516 V518.6 L77.2 521.6 M79 518.6 L80.4 521"/>
  </g>
  <g stroke="#171717" stroke-width="0.9">
    <path d="M75.2 515 L78 516 H80 L82.8 515"/>
    <path d="M79 516 V518.6 L77.2 521.6 M79 518.6 L80.4 521"/>
  </g>
  <circle cx="79" cy="512.6" r="1.35" stroke="#ececec" stroke-width="0.95" fill="#171717"/>
  <path d="M80.8 517.2 L85.8 522.4 M85.8 517.2 L80.8 522.4" stroke="#171717" stroke-width="2.4"/>
  <path d="M80.8 517.2 L85.8 522.4 M85.8 517.2 L80.8 522.4" stroke="#ececec" stroke-width="1"/>
</g>
<!-- view icons (dim) -->
<g stroke="#6f6f6f" stroke-width="1">
  <rect x="464.6" y="512.2" width="10" height="9.4"/>
  <path d="M467.9 512.2 V521.6 M471.3 512.2 V521.6 M464.6 515.3 H474.6 M464.6 518.5 H474.6"/>
  <rect x="499.4" y="512.2" width="10" height="9.4"/>
  <rect x="501.8" y="514.4" width="5.2" height="5" />
  <path d="M503.2 516.2 H505.6 M503.2 517.8 H505.6" stroke-width="0.7"/>
  <rect x="533.4" y="512.2" width="10" height="9.4"/>
  <path d="M537.4 512.2 V517 H543.4"/>
  <path d="M562 517 H567" />
  <path d="M660.6 517 H666.2 M663.4 514.2 V519.8"/>
</g>
<path d="M571 517 H656" stroke="#939393" stroke-width="1.3" stroke-linecap="butt"/>
<path d="M613.6 514 V520" stroke="#a8a8a8" stroke-width="1.4" stroke-linecap="butt"/>
</svg>

</div>
</body>
</html>
